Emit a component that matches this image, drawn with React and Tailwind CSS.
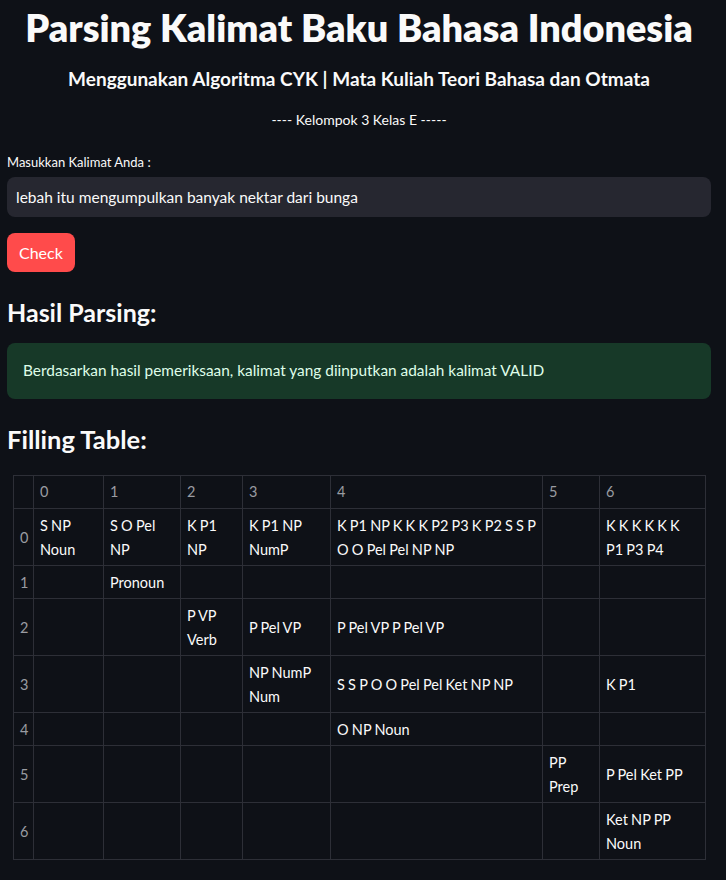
import React, { useState } from "react";

const headers = ["0", "1", "2", "3", "4", "5", "6"];
const colWidths = ["w-[20px]", "w-[70px]", "w-[77px]", "w-[62px]", "w-[88px]", "w-[212px]", "w-[57px]", "w-[106px]"];

// each cell is a list of display lines
const rows = [
  [["S NP", "Noun"], ["S O Pel", "NP"], ["K P1", "NP"], ["K P1 NP", "NumP"], ["K P1 NP K K K P2 P3 K P2 S S P", "O O Pel Pel NP NP"], [], ["K K K K K K", "P1 P3 P4"]],
  [[], ["Pronoun"], [], [], [], [], []],
  [[], [], ["P VP", "Verb"], ["P Pel VP"], ["P Pel VP P Pel VP"], [], []],
  [[], [], [], ["NP NumP", "Num"], ["S S P O O Pel Pel Ket NP NP"], [], ["K P1"]],
  [[], [], [], [], ["O NP Noun"], [], []],
  [[], [], [], [], [], ["PP", "Prep"], ["P Pel Ket PP"]],
  [[], [], [], [], [], [], ["Ket NP PP", "Noun"]],
];

const font = { fontFamily: "Lato, 'Noto Sans', sans-serif" };

export default function App() {
  const [kalimat, setKalimat] = useState("lebah itu mengumpulkan banyak nektar dari bunga");

  return (
    <div className="min-h-[880px] w-full bg-[#0e1117] text-[#fafafa]" style={font}>
      <div className="flex flex-col px-[7px] w-[718px]">
        <h1 className="mt-[4px] text-center text-[37.8px] leading-[48px] font-extrabold">
          Parsing Kalimat Baku Bahasa Indonesia
        </h1>
        <h4 className="mt-[13px] text-center text-[19px] leading-[28px] font-bold">
          Menggunakan Algoritma CYK | Mata Kuliah Teori Bahasa dan Otmata
        </h4>
        <p className="mt-[17px] text-center text-[14px] leading-[20px]">---- Kelompok 3 Kelas E -----</p>

        <label className="mt-[22px] text-[13px] leading-[20px]">Masukkan Kalimat Anda :</label>
        <input
          className="mt-[5px] h-[40px] w-full rounded-lg bg-[#262730] px-[9px] text-[15.5px] text-[#fafafa] outline-none"
          value={kalimat}
          onChange={(e) => setKalimat(e.target.value)}
        />
        <div className="mt-[16px]">
          <button className="h-[39px] rounded-lg bg-[#ff4b4b] px-[12px] text-[16px] text-white">Check</button>
        </div>

        <h3 className="mt-[24px] text-[25px] leading-[32px] font-bold">Hasil Parsing:</h3>
        <div className="mt-[15px] flex h-[56px] items-center rounded-lg bg-[#173928] px-[16px] text-[15.4px] text-[#dffde9]">
          Berdasarkan hasil pemeriksaan, kalimat yang diinputkan adalah kalimat VALID
        </div>

        <h3 className="mt-[24px] text-[25.5px] leading-[32px] font-bold">Filling Table:</h3>
        <div className="mt-[20px] pl-[6px]">
          <table className="table-fixed border-collapse w-[692px] text-[14.5px] leading-[24px] [word-spacing:-0.5px]">
            <colgroup>
              {colWidths.map((w, i) => (
                <col key={i} className={w} />
              ))}
            </colgroup>
            <thead>
              <tr>
                <th className="border border-[#2d2f37] px-[6px] py-[4px]"></th>
                {headers.map((h) => (
                  <th key={h} className="border border-[#2d2f37] px-[6px] py-[4px] text-left font-normal text-[#9a9ca2]">
                    {h}
                  </th>
                ))}
              </tr>
            </thead>
            <tbody>
              {rows.map((row, r) => (
                <tr key={r}>
                  <td className="border border-[#2d2f37] px-[6px] pt-[5px] pb-[3px] text-[#9a9ca2]">{r}</td>
                  {row.map((lines, c) => (
                    <td key={c} className="border border-[#2d2f37] px-[6px] pt-[5px] pb-[3px] align-middle">
                      {lines.map((l, k) => (
                        <div key={k} className="whitespace-nowrap">{l}</div>
                      ))}
                    </td>
                  ))}
                </tr>
              ))}
            </tbody>
          </table>
        </div>
      </div>
    </div>
  );
}
